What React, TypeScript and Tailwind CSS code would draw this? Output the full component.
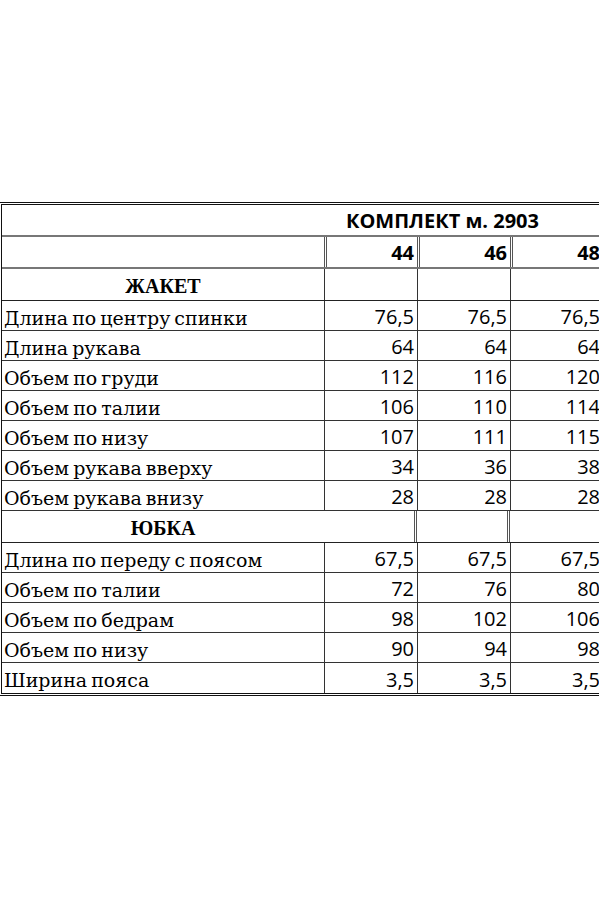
const serif = "font-['DejaVu_Serif',serif]";
const sans = "font-['Open_Sans',sans-serif]";

type Row = [string, string, string, string];

const jacket: Row[] = [
  ["Длина по центру спинки", "76,5", "76,5", "76,5"],
  ["Длина рукава", "64", "64", "64"],
  ["Объем по груди", "112", "116", "120"],
  ["Объем по талии", "106", "110", "114"],
  ["Объем по низу", "107", "111", "115"],
  ["Объем рукава вверху", "34", "36", "38"],
  ["Объем рукава внизу", "28", "28", "28"],
];

const skirt: Row[] = [
  ["Длина по переду с поясом", "67,5", "67,5", "67,5"],
  ["Объем по талии", "72", "76", "80"],
  ["Объем по бедрам", "98", "102", "106"],
  ["Объем по низу", "90", "94", "98"],
  ["Ширина пояса", "3,5", "3,5", "3,5"],
];

const DataRow = ({ row, last }: { row: Row; last?: boolean }) => (
  <div className={`flex h-[30px] ${last ? "" : "border-b border-[#333]"}`}>
    <div className={`w-[322px] shrink-0 flex items-center pl-[2px] pt-[5px] text-[19px] leading-none text-black [word-spacing:-2px] ${serif}`}>
      {row[0]}
    </div>
    {row.slice(1).map((v, i) => (
      <div
        key={i}
        className={`w-[93px] shrink-0 border-l border-[#333] flex items-center justify-end pr-[3px] pt-[3px] text-[20px] leading-none text-black ${sans}`}
      >
        {v}
      </div>
    ))}
  </div>
);

const SectionRow = ({ title, wide }: { title: string; wide?: boolean }) => (
  <div className="flex h-[32px] border-b border-[#222]">
    <div
      className={`${wide ? "w-[415px] border-r-[3px] border-double border-[#555]" : "w-[322px]"} shrink-0 flex items-center pt-[2px]`}
    >
      <span className="w-[322px] text-center font-bold text-[20px] leading-none text-black font-['Liberation_Serif',serif]">{title}</span>
    </div>
    {!wide && <div className="w-[93px] shrink-0 border-l border-[#333]" />}
    <div className={`w-[93px] shrink-0 ${wide ? "border-r-[3px] border-double border-[#555]" : "border-l border-[#333]"}`} />
    <div className={`w-[93px] shrink-0 ${wide ? "" : "border-l border-[#333]"}`} />
  </div>
);

export default function App() {
  return (
    <div className="w-[599px] h-[899px] bg-white overflow-hidden pt-[202px]">
      <div className="w-[610px] border-t border-[#111] pt-[1px]">
        <div className="ml-[1px] w-[606px] border-t border-l border-b border-[#111]">
          <div className="flex h-[32px] items-center border-b-[2px] border-[#777]">
            <div className="w-[322px] shrink-0" />
            <div className={`pl-[22px] pt-[1px] font-bold text-[20px] leading-none text-black ${sans}`}>
              КОМПЛЕКТ м. 2903
            </div>
          </div>
          <div className="flex h-[32px] border-b-[2px] border-[#777]">
            <div className="w-[322px] shrink-0" />
            {["44", "46", "48"].map((s) => (
              <div
                key={s}
                className={`w-[93px] shrink-0 border-l-[3px] border-double border-[#555] flex items-center justify-end pr-[3px] pt-[2px] font-bold text-[20px] leading-none text-black ${sans}`}
              >
                {s}
              </div>
            ))}
          </div>
          <SectionRow title="ЖАКЕТ" />
          {jacket.map((r) => (
            <DataRow key={r[0]} row={r} />
          ))}
          <SectionRow title="ЮБКА" wide />
          {skirt.map((r, i) => (
            <DataRow key={r[0] + i} row={r} last={i === skirt.length - 1} />
          ))}
        </div>
        <div className="mt-[1px] border-t border-[#111]" />
      </div>
    </div>
  );
}
